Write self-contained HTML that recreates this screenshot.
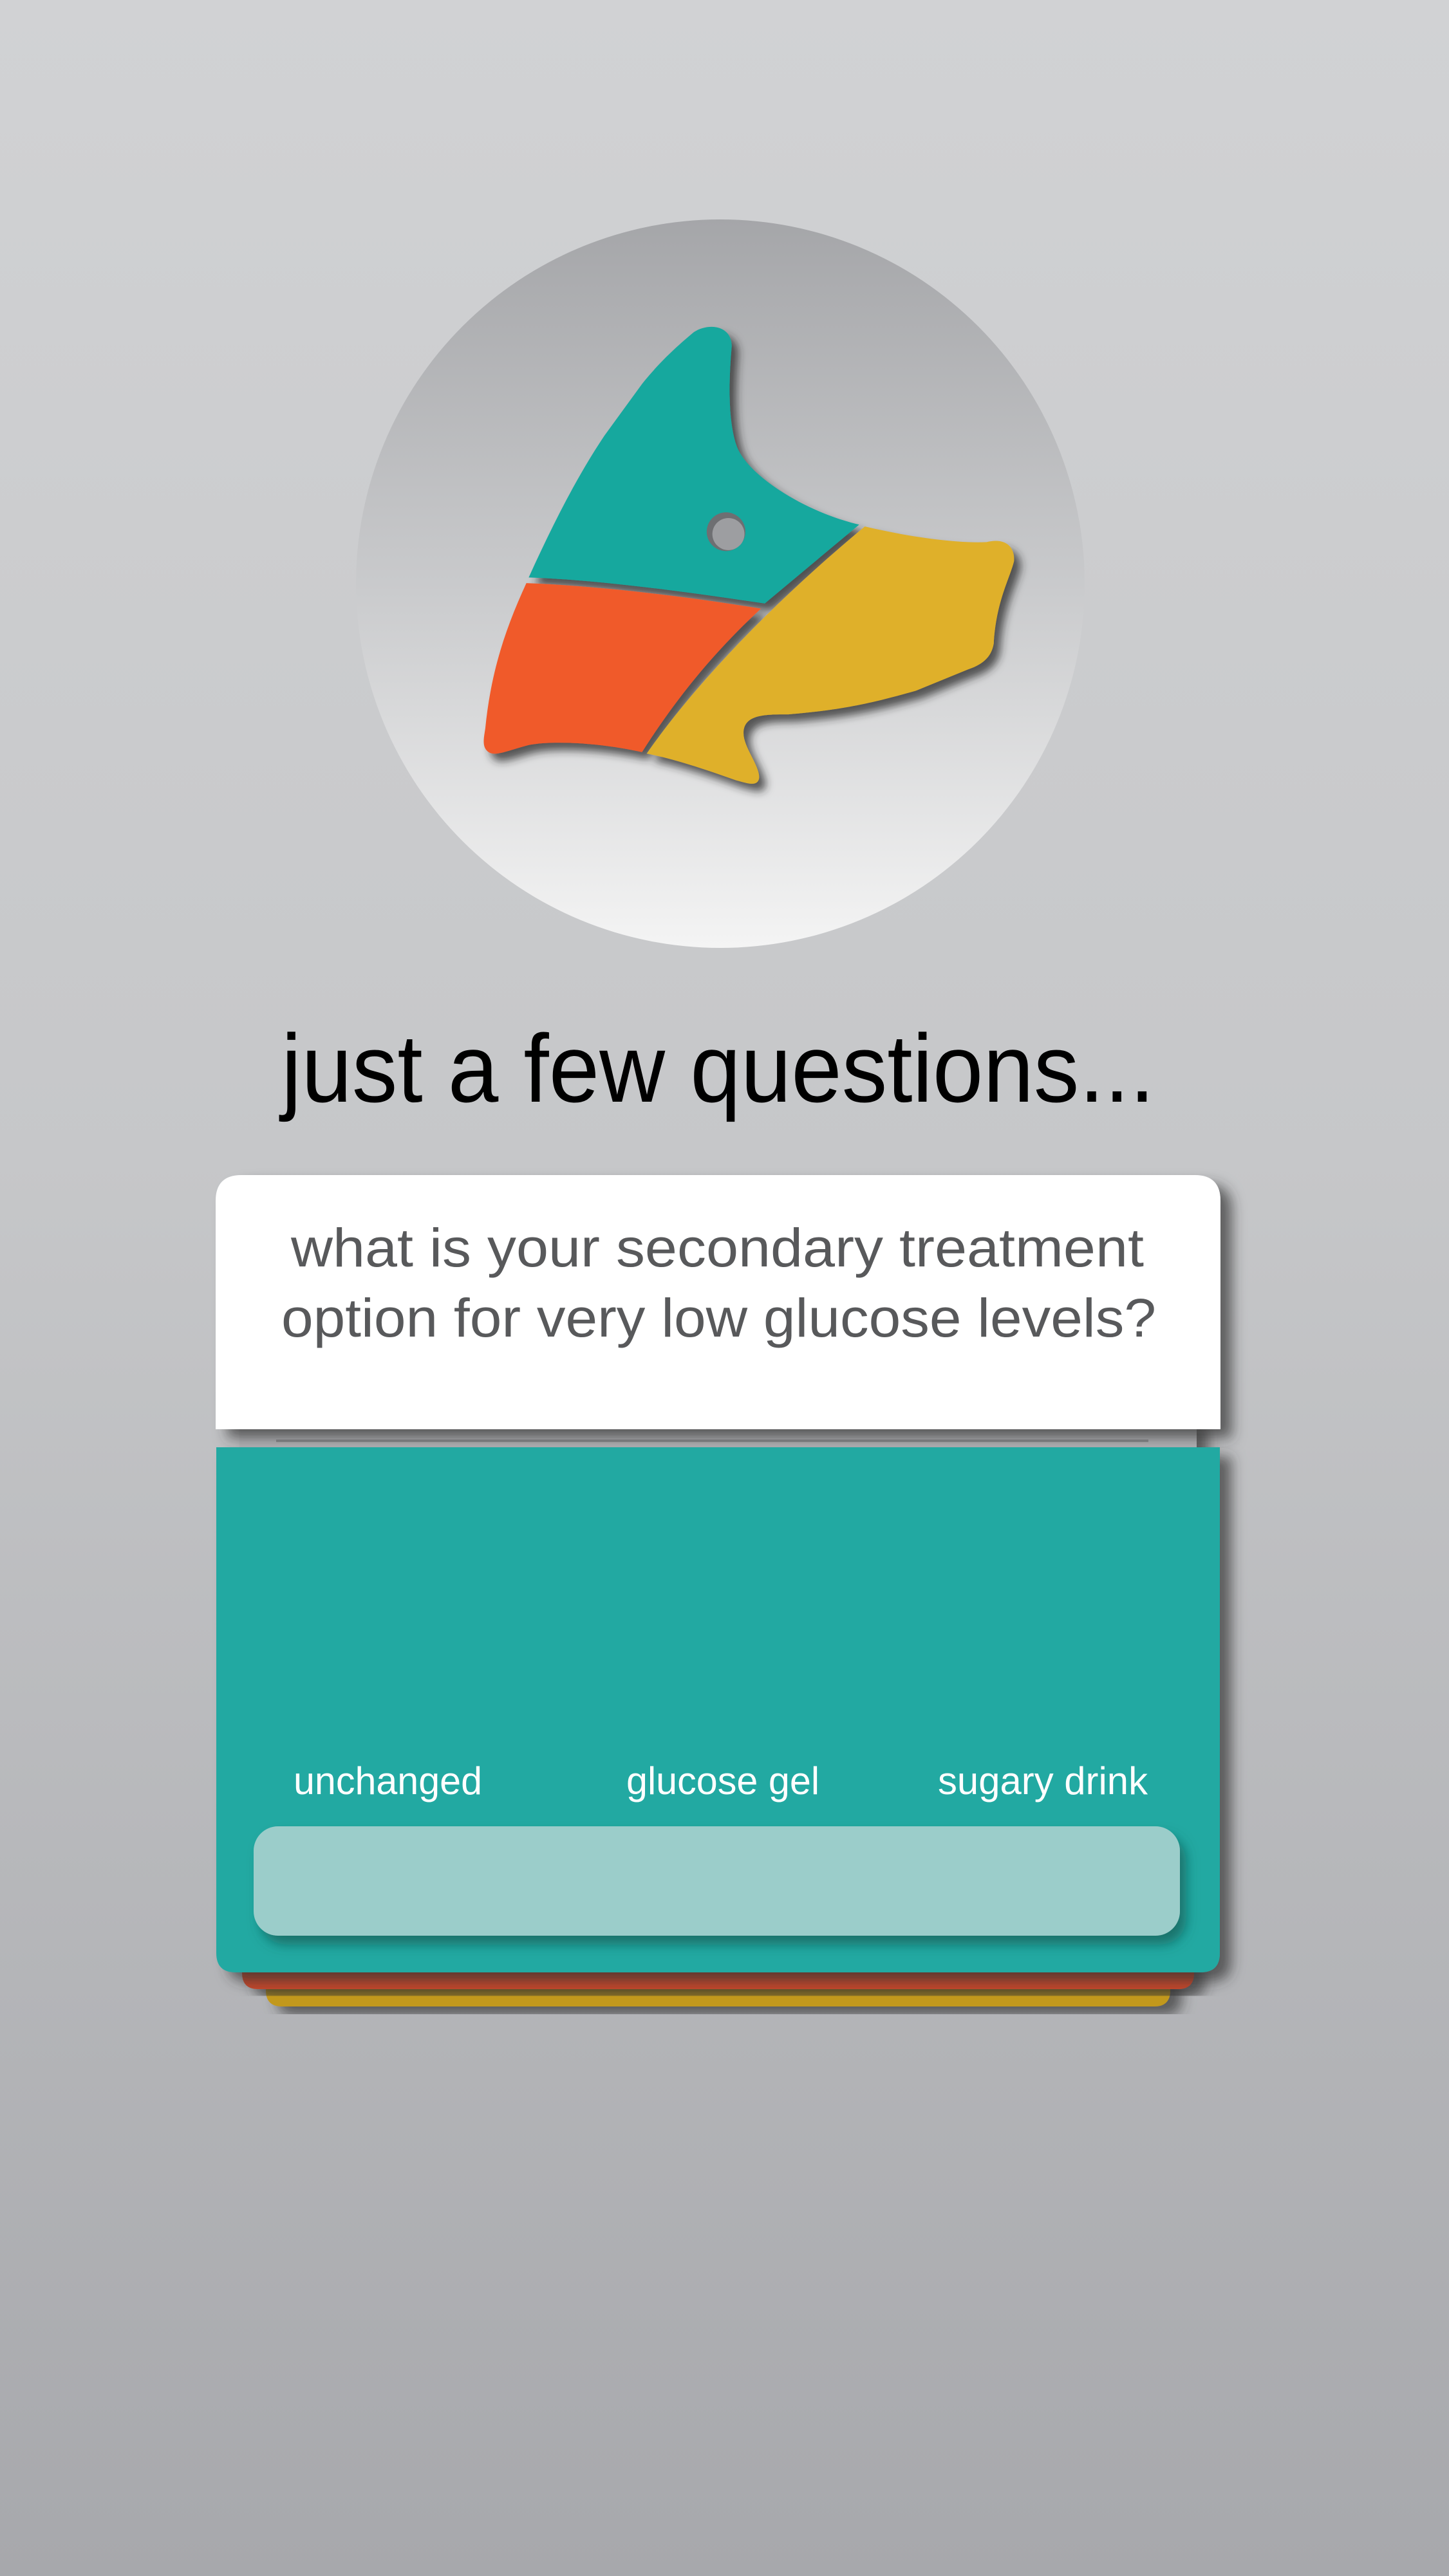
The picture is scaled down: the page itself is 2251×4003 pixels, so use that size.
<!DOCTYPE html>
<html><head><meta charset="utf-8"><style>
html,body{margin:0;padding:0;}
body{width:2251px;height:4003px;overflow:hidden;}
svg{display:block;}
</style></head><body>
<svg width="2251" height="4003" viewBox="0 0 2251 4003" xmlns="http://www.w3.org/2000/svg">
<defs>
<linearGradient id="bg" x1="0" y1="0" x2="0" y2="1">
<stop offset="0" stop-color="#d1d2d4"/><stop offset="0.45" stop-color="#c6c7c9"/><stop offset="1" stop-color="#a7a8ac"/>
</linearGradient>
<linearGradient id="circ" x1="0" y1="0" x2="0" y2="1">
<stop offset="0" stop-color="#a5a6a9"/><stop offset="0.5" stop-color="#c9cacc"/><stop offset="1" stop-color="#f4f4f4"/>
</linearGradient>
<filter id="sh" x="-20%" y="-20%" width="150%" height="150%">
<feDropShadow dx="14" dy="16" stdDeviation="9" flood-color="#2a2a2a" flood-opacity="0.75"/>
</filter>
<filter id="csh" x="-10%" y="-10%" width="125%" height="130%">
<feDropShadow dx="18" dy="14" stdDeviation="10" flood-color="#333" flood-opacity="0.7"/>
</filter>
<filter id="ssh" x="-10%" y="-20%" width="125%" height="160%">
<feDropShadow dx="10" dy="14" stdDeviation="9" flood-color="#0a4f4a" flood-opacity="0.6"/>
</filter>
</defs>
<rect width="2251" height="4003" fill="url(#bg)"/>
<circle cx="1119" cy="907" r="566" fill="url(#circ)"/>
<g transform="translate(550,340) scale(0.7334)">
<g filter="url(#sh)">
<path d="M370,760 C420,650 470,550 530,460 L610,350 C650,300 690,265 720,240 C750,220 800,225 800,270 C795,330 790,420 810,480 C830,540 950,620 1070,648 L870,815 C700,790 520,765 370,760 Z" fill="#12a89e"/>
<path d="M365,772 C520,778 700,800 862,826 C760,920 680,1020 610,1130 C520,1110 420,1105 370,1115 C330,1125 300,1140 285,1130 C270,1120 275,1100 278,1080 C290,960 320,870 365,772 Z" fill="#f05a2a"/>
<path d="M1082,652 C1180,675 1280,688 1340,685 C1380,675 1400,695 1398,725 C1390,760 1360,810 1355,900 C1350,930 1330,945 1300,955 L1190,1000 C1100,1025 1040,1040 920,1050 C870,1050 825,1050 825,1090 C825,1120 860,1160 858,1185 C855,1205 830,1195 810,1190 C740,1165 680,1145 620,1133 C720,990 880,820 1082,652 Z" fill="#dfb02b"/>
</g>
<circle cx="788" cy="663" r="41" fill="#6e6f72"/>
<circle cx="793" cy="668" r="34" fill="#9d9ea1"/>
</g>
<text x="437" y="1712" font-family="Liberation Sans, sans-serif" font-size="150" fill="#000" textLength="1357" lengthAdjust="spacingAndGlyphs">just a few questions...</text>
<!-- stacked cards -->
<path d="M413,3060 H1818 V3093 Q1818,3118 1793,3118 H438 Q413,3118 413,3093 Z" fill="#c2981d" filter="url(#csh)"/>
<path d="M376,3040 H1855 V3066 Q1855,3091 1830,3091 H401 Q376,3091 376,3066 Z" fill="#c8462a" filter="url(#csh)"/>
<!-- gray strip -->
<rect x="372" y="2200" width="1487" height="60" fill="#b7b8bb" filter="url(#csh)"/>
<rect x="429" y="2237" width="1355" height="4" fill="#8f9093"/>
<!-- white card -->
<path d="M335,1866 Q335,1826 375,1826 H1856 Q1896,1826 1896,1866 V2221 H335 Z" fill="#fff" filter="url(#csh)"/>
<text x="452" y="1968" font-family="Liberation Sans, sans-serif" font-size="84" fill="#58595b" textLength="1325" lengthAdjust="spacingAndGlyphs">what is your secondary treatment</text>
<text x="437" y="2077" font-family="Liberation Sans, sans-serif" font-size="84" fill="#58595b" textLength="1359" lengthAdjust="spacingAndGlyphs">option for very low glucose levels?</text>
<!-- teal card -->
<path d="M336,2249 H1895 V3035 Q1895,3065 1865,3065 H366 Q336,3065 336,3035 Z" fill="#22a9a2" filter="url(#csh)"/>
<text x="456" y="2788" font-family="Liberation Sans, sans-serif" font-size="60" fill="#fff" textLength="293" lengthAdjust="spacingAndGlyphs">unchanged</text>
<text x="973" y="2788" font-family="Liberation Sans, sans-serif" font-size="60" fill="#fff" textLength="300" lengthAdjust="spacingAndGlyphs">glucose gel</text>
<text x="1457" y="2788" font-family="Liberation Sans, sans-serif" font-size="60" fill="#fff" textLength="326" lengthAdjust="spacingAndGlyphs">sugary drink</text>
<rect x="394" y="2838" width="1439" height="170" rx="38" fill="#9bcdca" filter="url(#ssh)"/>
</svg>
</body></html>
